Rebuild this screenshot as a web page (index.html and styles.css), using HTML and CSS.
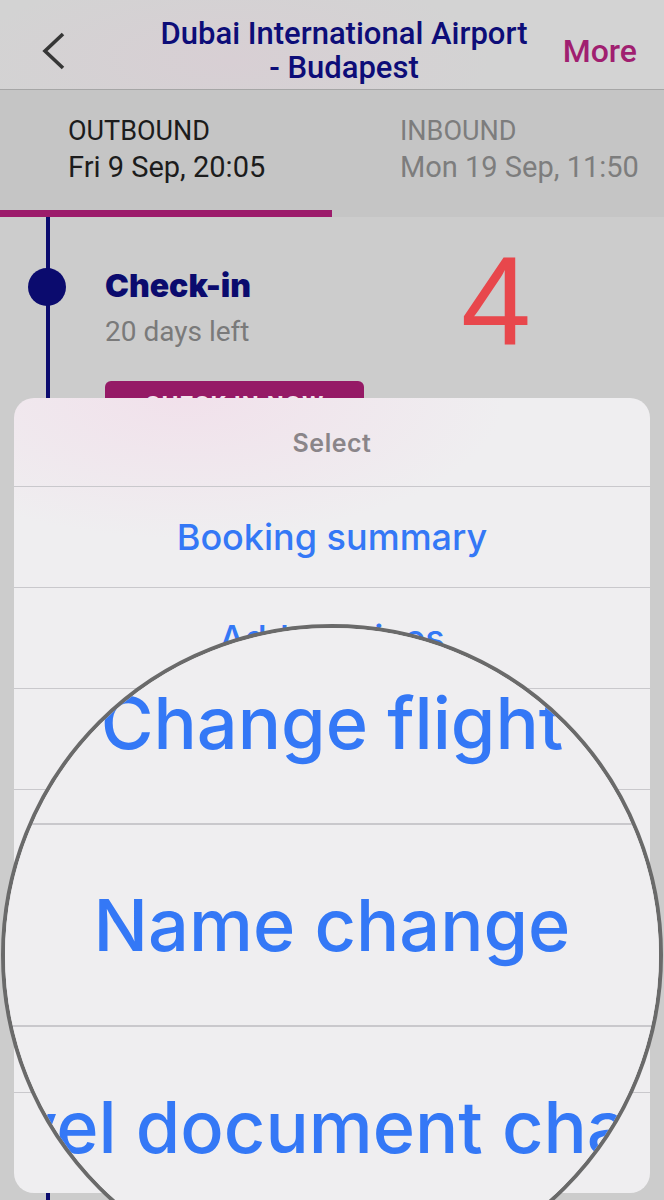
FILE: index.html
```html
<!DOCTYPE html>
<html lang="en">

<head>
  <meta charset="UTF-8">
  <meta name="viewport" content="width=device-width, initial-scale=1.0">
  <title>Manage booking</title>
  <link rel="stylesheet" href="styles.css">
</head>

<body>
  <div class="screen">
    <header class="nav">
      <div class="nav-back">
        <svg width="26" height="38" viewBox="0 0 26 38">
          <path d="M23 2 L5 19 L23 36" fill="none" stroke="#363636" stroke-width="3.6" />
        </svg>
      </div>
      <h1 class="nav-title">Dubai International Airport<br>- Budapest</h1>
      <div class="nav-more">More</div>
    </header>

    <nav class="tabs">
      <div class="tab tab-active">
        <div class="tab-label">OUTBOUND</div>
        <div class="tab-date">Fri 9 Sep, 20:05</div>
      </div>
      <div class="tab">
        <div class="tab-label">INBOUND</div>
        <div class="tab-date">Mon 19 Sep, 11:50</div>
      </div>
    </nav>

    <main class="timeline">
      <div class="step">
        <div class="step-marker"><span class="step-dot"></span></div>
        <div class="step-body">
          <div class="step-title">Check-in</div>
          <div class="step-sub">20 days left</div>
          <button class="step-btn">CHECK IN NOW</button>
        </div>
      </div>
    </main>

    <!-- annotation number -->
    <div class="note-num">4</div>

    <div class="sheet">
      <div class="sheet-head">Select</div>
      <div class="sheet-item">Booking summary</div>
      <div class="sheet-item">Add services</div>
      <div class="sheet-item">Change flight</div>
      <div class="sheet-item">Name change</div>
      <div class="sheet-item">Travel document change</div>
      <div class="sheet-item">Flight status</div>
      <div class="sheet-item">Cancel booking</div>
    </div>

    <!-- magnifier loupe: same sheet, scaled 2x -->
    <div class="lens">
      <div class="lens-view">
        <div class="sheet">
          <div class="sheet-head">Select</div>
          <div class="sheet-item">Booking summary</div>
          <div class="sheet-item">Add services</div>
          <div class="sheet-item">Change flight</div>
          <div class="sheet-item">Name change</div>
          <div class="sheet-item">Travel document change</div>
          <div class="sheet-item">Flight status</div>
          <div class="sheet-item">Cancel booking</div>
        </div>
      </div>
    </div>
  </div>
</body>

</html>
```

FILE: styles.css
```css
* {
  margin: 0;
  padding: 0;
  box-sizing: border-box;
}

body {
  font-family: 'Roboto', 'Liberation Sans', sans-serif;
  background: #cccccc;
}

.screen {
  position: relative;
  width: 664px;
  height: 1200px;
  overflow: hidden;
  display: flex;
  flex-direction: column;
  background: #cccccc;
}

/* top bar */
.nav {
  display: flex;
  align-items: center;
  height: 90px;
  padding-top: 12px;
  border-bottom: 1px solid #a6a6a6;
  background: radial-gradient(ellipse 260px 90px at 230px 60px, #d8cfd4, #d3d3d3);
}

.nav-back {
  width: 131px;
  padding-left: 40px;
  display: flex;
  align-items: center;
}

.nav-title {
  flex: 1;
  text-align: center;
  font-size: 31px;
  line-height: 34px;
  font-weight: 500;
  color: #0d0d78;
}

.nav-more {
  width: 107px;
  padding-right: 27px;
  text-align: right;
  font-size: 32px;
  line-height: 34px;
  font-weight: 500;
  color: #a01f70;
}

/* outbound / inbound */
.tabs {
  display: flex;
  height: 127px;
  background: #c5c5c5;
}

.tab {
  width: 332px;
  padding: 26px 0 0 68px;
  color: #7d7d7d;
}

.tab-active {
  color: #1c1c1c;
  border-bottom: 7px solid #9c1b6b;
}

.tab-label {
  font-size: 27px;
  line-height: 30px;
}

.tab-date {
  font-size: 29px;
  line-height: 36px;
  margin-top: 3px;
}

/* timeline */
.timeline {
  flex: 1;
  background: linear-gradient(#0b0b6e, #0b0b6e) no-repeat 46px 0 / 4px 100%;
}

.step {
  display: flex;
}

.step-marker {
  width: 105px;
  padding: 51px 0 0 28px;
}

.step-dot {
  display: block;
  width: 38px;
  height: 38px;
  border-radius: 50%;
  background: #0b0b6e;
}

.step-body {
  padding-top: 50px;
}

.step-title {
  font-family: 'Inter', sans-serif;
  font-size: 32px;
  line-height: 38px;
  font-weight: 900;
  color: #0b0b6e;
}

.step-sub {
  margin-top: 10px;
  font-size: 28px;
  line-height: 34px;
  color: #7a7a7a;
}

.step-btn {
  display: block;
  margin-top: 32px;
  width: 259px;
  padding: 11px 0 22px;
  border: 0;
  border-radius: 6px;
  background: #951a66;
  color: #f2e3ec;
  font-family: 'Roboto', sans-serif;
  font-weight: 700;
  font-size: 24px;
  line-height: 26px;
  letter-spacing: 1px;
  text-align: center;
}

.note-num {
  position: absolute;
  left: 461px;
  top: 232px;
  font-family: 'Liberation Sans', sans-serif;
  font-size: 126px;
  line-height: 140px;
  color: #e8474c;
}

/* action sheet */
.sheet {
  position: absolute;
  left: 14px;
  top: 398px;
  width: 636px;
  height: 795px;
  border-radius: 20px;
  overflow: hidden;
  background: radial-gradient(ellipse 320px 140px at 170px 0, #f1e1eb, #efeef0);
  font-family: 'Inter', sans-serif;
}

.sheet-head {
  height: 88px;
  display: flex;
  align-items: center;
  justify-content: center;
  padding-top: 2px;
  font-size: 25px;
  font-weight: 600;
  letter-spacing: 0.5px;
  color: #8a8589;
}

.sheet-item {
  height: 101px;
  border-top: 1px solid #c9c8cc;
  display: flex;
  align-items: center;
  justify-content: center;
  font-size: 36px;
  font-weight: 500;
  color: #3478f6;
}

/* magnifier */
.lens {
  position: absolute;
  left: 1px;
  top: 624px;
  width: 662px;
  height: 662px;
  border-radius: 50%;
  border: 4px solid #6a6a6a;
  overflow: hidden;
  background: #efeef0;
}

.lens-view {
  position: absolute;
  left: -5px;
  top: -628px;
  width: 664px;
  height: 1200px;
  transform-origin: 332px 755px;
  transform: scale(2);
}
```
